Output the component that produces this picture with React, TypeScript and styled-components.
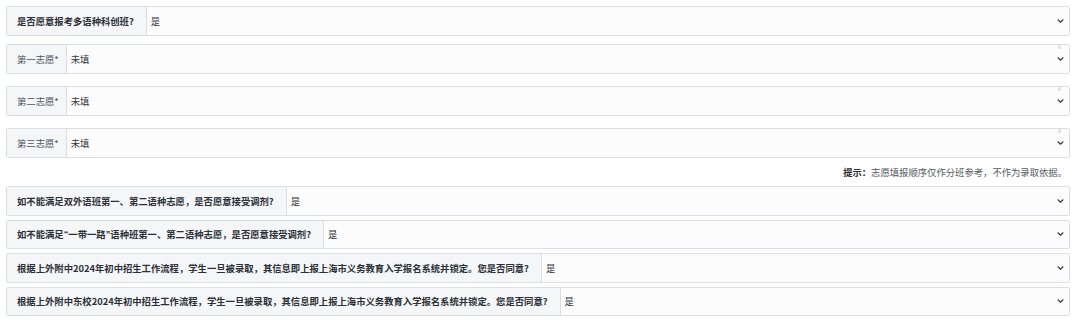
import React from "react";
import styled, { createGlobalStyle } from "styled-components";

const GlobalStyle = createGlobalStyle`
  html, body {
    margin: 0;
    padding: 0;
    background: #ffffff;
    font-family: "Noto Sans CJK SC", "Noto Sans", sans-serif;
  }
`;

const Page = styled.div`
  width: 1080px;
  padding: 6px 10px 0 6px;
  box-sizing: border-box;
`;

const Group = styled.div<{ $gap: number }>`
  display: flex;
  flex-direction: column;
  gap: ${(p) => p.$gap}px;
`;

const Row = styled.div<{ $height: number; $top?: number }>`
  position: relative;
  display: flex;
  height: ${(p) => p.$height}px;
  margin-top: ${(p) => p.$top ?? 0}px;
  box-sizing: border-box;
  border: 1px solid #dcdee3;
  border-radius: 2px;
  overflow: hidden;
  font-size: 9.33px;
`;

const Label = styled.div<{ $strong?: boolean }>`
  flex: none;
  display: flex;
  align-items: center;
  padding: 0 ${(p) => (p.$strong ? 12 : 7)}px 0 10px;
  background: #f5f6f8;
  border-right: 1px solid #dcdee3;
  color: ${(p) => (p.$strong ? "#2b2f36" : "#50555d")};
  font-weight: ${(p) => (p.$strong ? 700 : 400)};
  white-space: nowrap;
`;

// narrow western quotes, as in the original form
const Quote = styled.span`
  font-family: "Liberation Sans", "Noto Sans", sans-serif;
`;

const Field = styled.div`
  flex: 1;
  display: flex;
  align-items: center;
  justify-content: space-between;
  padding: 0 5px 0 4px;
  background: #fcfcfd;
  color: #333740;
`;

const Marker = styled.span`
  position: absolute;
  top: 0;
  right: 8px;
  width: 3px;
  height: 4px;
  background: #e3e4e8;
`;

const Hint = styled.div`
  height: 28px;
  display: flex;
  align-items: center;
  justify-content: flex-end;
  padding-right: 3px;
  font-size: 9.33px;
  color: #555a62;
  b {
    color: #2b2f36;
    font-weight: 700;
  }
`;

const Chevron = () => (
  <svg width="7" height="4" viewBox="0 0 7 4">
    <polyline
      points="1,0.8 3.5,3.2 6,0.8"
      fill="none"
      stroke="#3a3d44"
      strokeWidth="1.2"
      strokeLinecap="round"
      strokeLinejoin="round"
    />
  </svg>
);

type SelectRowProps = {
  label: React.ReactNode;
  value: string;
  strong?: boolean;
  marker?: boolean;
  height: number;
  top?: number;
};

const SelectRow: React.FC<SelectRowProps> = ({ label, value, strong, marker, height, top }) => (
  <Row $height={height} $top={top}>
    <Label $strong={strong}>{label}</Label>
    <Field>
      <span>{value}</span>
      <Chevron />
    </Field>
    {marker && <Marker />}
  </Row>
);

const bottomRows: { id: string; label: React.ReactNode }[] = [
  { id: "q1", label: "如不能满足双外语班第一、第二语种志愿，是否愿意接受调剂?" },
  {
    id: "q2",
    label: (
      <>
        如不能满足<Quote>“</Quote>一带一路<Quote>”</Quote>语种班第一、第二语种志愿，是否愿意接受调剂?
      </>
    ),
  },
  {
    id: "q3",
    label: "根据上外附中2024年初中招生工作流程，学生一旦被录取，其信息即上报上海市义务教育入学报名系统并锁定。您是否同意?",
  },
  {
    id: "q4",
    label: "根据上外附中东校2024年初中招生工作流程，学生一旦被录取，其信息即上报上海市义务教育入学报名系统并锁定。您是否同意?",
  },
];

export default function App() {
  return (
    <>
      <GlobalStyle />
      <Page>
        <SelectRow label="是否愿意报考多语种科创班?" value="是" strong height={30} />
        <SelectRow label="第一志愿*" value="未填" marker height={30} top={8} />
        <SelectRow label="第二志愿*" value="未填" marker height={30} top={12} />
        <SelectRow label="第三志愿*" value="未填" marker height={30} top={12} />
        <Hint>
          <b>提示：</b>志愿填报顺序仅作分班参考，不作为录取依据。
        </Hint>
        <Group $gap={4}>
          {bottomRows.map((q) => (
            <SelectRow key={q.id} label={q.label} value="是" strong height={29.5} />
          ))}
        </Group>
      </Page>
    </>
  );
}
